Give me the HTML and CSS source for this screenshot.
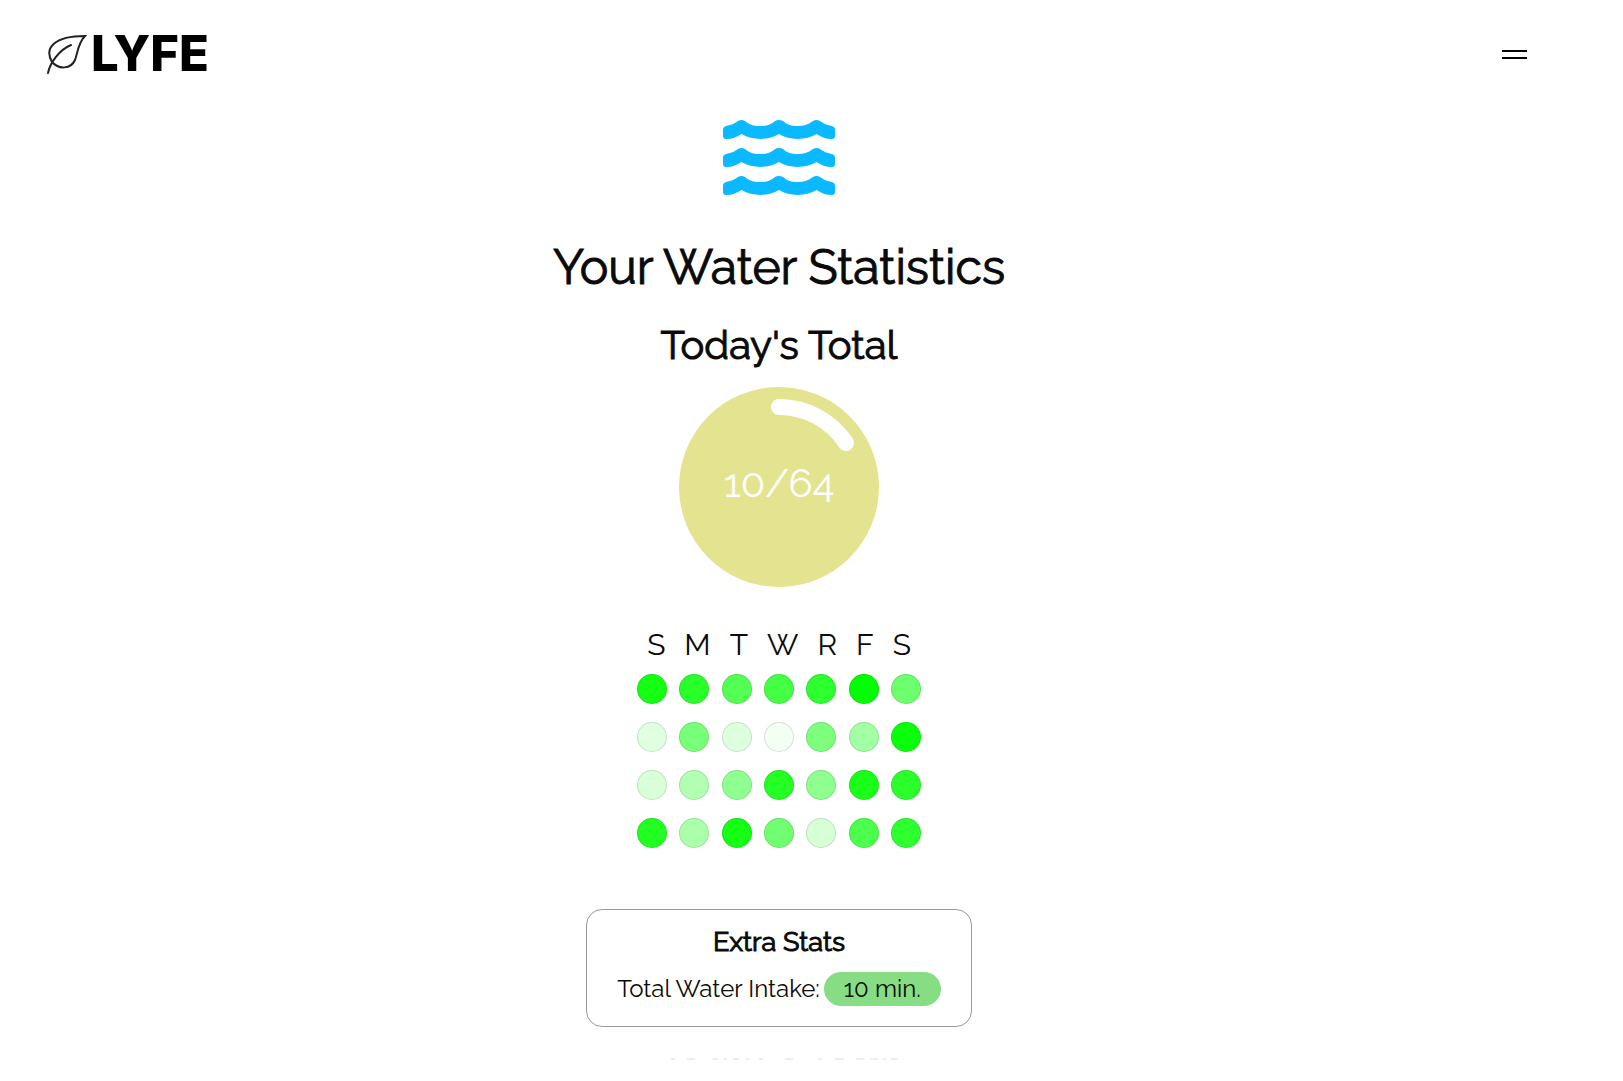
FILE: index.html
```html
<!DOCTYPE html>
<html lang="en">
<head>
<meta charset="utf-8">
<title>Lyfe - Water Statistics</title>
<meta name="viewport" content="width=device-width, initial-scale=1">
<link rel="stylesheet" href="styles.css">
</head>
<body>
<div class="page">
  <header class="header">
    <a class="logo" href="#" aria-label="Lyfe home">
      <svg class="logo-leaf" viewBox="0 0 40 40" aria-hidden="true">
        <path d="M5 28C-3 14 7 2 38 2C31 9 31 18 28 26C24 35 12 36 5 28ZM1 39C3 29 12 16 24 11"/>
      </svg>
      <span class="logo-text">LYFE</span>
    </a>
    <button class="menu" type="button" aria-label="Menu"></button>
  </header>
  <main class="main">
    <svg class="waves" viewBox="0 0 112 75" aria-hidden="true">
      <defs>
        <path id="wave" d="M0 9Q0 7 3 6C9 5 12 3 15 1Q18.500 -1 22 1C28 6 33 6 37.500 6C43 6 48 5 52 1Q56 -1 60 1C64 5 69 6 74.500 6C80 6 85 5 90 1Q93.500 -1 97 1C100 3 103 5 109 6Q112 7 112 9V16Q112 19 109 19C103 19 98 17 93.500 14C82 20.500 67 20.500 56 14C45 20.500 30 20.500 18.500 14C14 17 9 19 3 19Q0 19 0 16Z"/>
      </defs>
      <use href="#wave"/>
      <use href="#wave" y="28"/>
      <use href="#wave" y="56"/>
    </svg>
    <h1 class="title">Your Water Statistics</h1>
    <h2 class="subtitle">Today's Total</h2>
    <div class="progress">
      <svg class="progress-ring" viewBox="0 0 200 200" aria-hidden="true">
        <circle class="progress-disc" cx="100" cy="100" r="100"/>
        <path class="progress-arc" d="M100 20A80 80 0 0 1 167 56"/>
      </svg>
      <span class="progress-label">10/64</span>
    </div>
    <table class="calendar">
      <thead>
        <tr class="weekdays"><th>S</th><th>M</th><th>T</th><th>W</th><th>R</th><th>F</th><th>S</th></tr>
      </thead>
      <tbody>
        <tr class="week">
          <td><i class="day" style="--level:.92"></i></td><td><i class="day" style="--level:.84"></i></td><td><i class="day" style="--level:.67"></i></td><td><i class="day" style="--level:.73"></i></td><td><i class="day" style="--level:.82"></i></td><td><i class="day" style="--level:1"></i></td><td><i class="day" style="--level:.57"></i></td>
        </tr>
        <tr class="week">
          <td><i class="day" style="--level:.12"></i></td><td><i class="day" style="--level:.53"></i></td><td><i class="day" style="--level:.13"></i></td><td><i class="day" style="--level:.05"></i></td><td><i class="day" style="--level:.51"></i></td><td><i class="day" style="--level:.36"></i></td><td><i class="day" style="--level:.96"></i></td>
        </tr>
        <tr class="week">
          <td><i class="day" style="--level:.15"></i></td><td><i class="day" style="--level:.3"></i></td><td><i class="day" style="--level:.44"></i></td><td><i class="day" style="--level:.86"></i></td><td><i class="day" style="--level:.44"></i></td><td><i class="day" style="--level:.9"></i></td><td><i class="day" style="--level:.83"></i></td>
        </tr>
        <tr class="week">
          <td><i class="day" style="--level:.87"></i></td><td><i class="day" style="--level:.33"></i></td><td><i class="day" style="--level:.92"></i></td><td><i class="day" style="--level:.56"></i></td><td><i class="day" style="--level:.16"></i></td><td><i class="day" style="--level:.7"></i></td><td><i class="day" style="--level:.82"></i></td>
        </tr>
      </tbody>
    </table>
    <section class="stats">
      <h3 class="stats-title">Extra Stats</h3>
      <p class="stats-row">Total Water Intake: <span class="pill">10 min.</span></p>
    </section>
    <svg class="edge" viewBox="0 0 232 2" aria-hidden="true">
      <path d="M2 1h4M18 1h8M43 1h6M55 1h3M64 1h6M77 1h3M90 1h4M116 1h8M149 1h4M166 1h9M187 1h8M201 1h8M214 1h3M222 1h7"/>
    </svg>
  </main>
</div>
</body>
</html>
```
FILE: styles.css
```css
* { box-sizing: border-box; }

body {
  margin: 0;
  background: #fff;
  color: #0a0a0a;
  font-family: Raleway, Lato, sans-serif;
}

.page { padding-right: 65px; }

.header {
  display: flex;
  align-items: center;
  justify-content: space-between;
  height: 108px;
  padding: 0 31px 0 47px;
}

.logo {
  display: flex;
  align-items: center;
  gap: 4px;
  color: #000;
  text-decoration: none;
}

.logo-leaf {
  width: 40px;
  height: 40px;
  fill: none;
  stroke: #222;
  stroke-width: 2;
  stroke-linecap: round;
}

.logo-text {
  font: 800 49px/56px Inter, sans-serif;
}

.menu {
  width: 25px;
  height: 9px;
  padding: 0;
  border: solid #000;
  border-width: 2px 0;
  background: none;
}

.main {
  display: flex;
  flex-direction: column;
  align-items: center;
  padding-top: 12px;
}

.waves {
  width: 112px;
  height: 75px;
  fill: #0ab9ff;
}

.title,
.subtitle,
.stats-title {
  font-weight: 400;
  -webkit-text-stroke: 1px currentColor;
}

.title {
  margin: 40px 0 0;
  font-size: 48px;
  line-height: 64px;
}

.subtitle {
  margin: 20px 0 0;
  font-size: 40px;
  line-height: 52px;
}

.progress {
  display: grid;
  place-items: center;
  margin-top: 16px;
  color: #fff;
  font-size: 40px;
}

.progress > * { grid-area: 1 / 1; }

.progress-label { padding-bottom: 10px; }

.progress-ring {
  width: 200px;
  height: 200px;
}

.progress-disc { fill: #e4e490; }

.progress-arc {
  fill: none;
  stroke: #fff;
  stroke-width: 16;
  stroke-linecap: round;
}

.calendar {
  display: block;
  margin-top: 38px;
}

.calendar thead,
.calendar tbody {
  display: block;
}

.weekdays,
.week {
  display: flex;
  justify-content: center;
}

.weekdays { gap: 19px; }

.calendar th {
  padding: 0;
  font-size: 30px;
  font-weight: 400;
  line-height: 40px;
}

.week {
  width: 284px;
  height: 48px;
  align-items: center;
  justify-content: space-between;
}

.calendar td { padding: 0; }

.day {
  display: block;
  width: 30px;
  height: 30px;
  border: 1px solid rgba(0, 0, 0, .12);
  border-radius: 50%;
  background: rgba(0, 255, 0, var(--level));
}

.stats {
  margin-top: 52px;
  padding: 16px 30px 20px;
  border: 1px solid #999;
  border-radius: 16px;
  text-align: center;
}

.stats-title {
  margin: 0;
  font-size: 27px;
  line-height: 32px;
}

.stats-row {
  display: flex;
  gap: 4px;
  margin: 14px 0 0;
  font-size: 24px;
  line-height: 34px;
}

.pill {
  padding: 0 20px;
  border-radius: 17px;
  background: #86dd83;
}

.edge {
  width: 232px;
  height: 2px;
  margin: 31px 0 0 12px;
  stroke: #ddd;
}
```
